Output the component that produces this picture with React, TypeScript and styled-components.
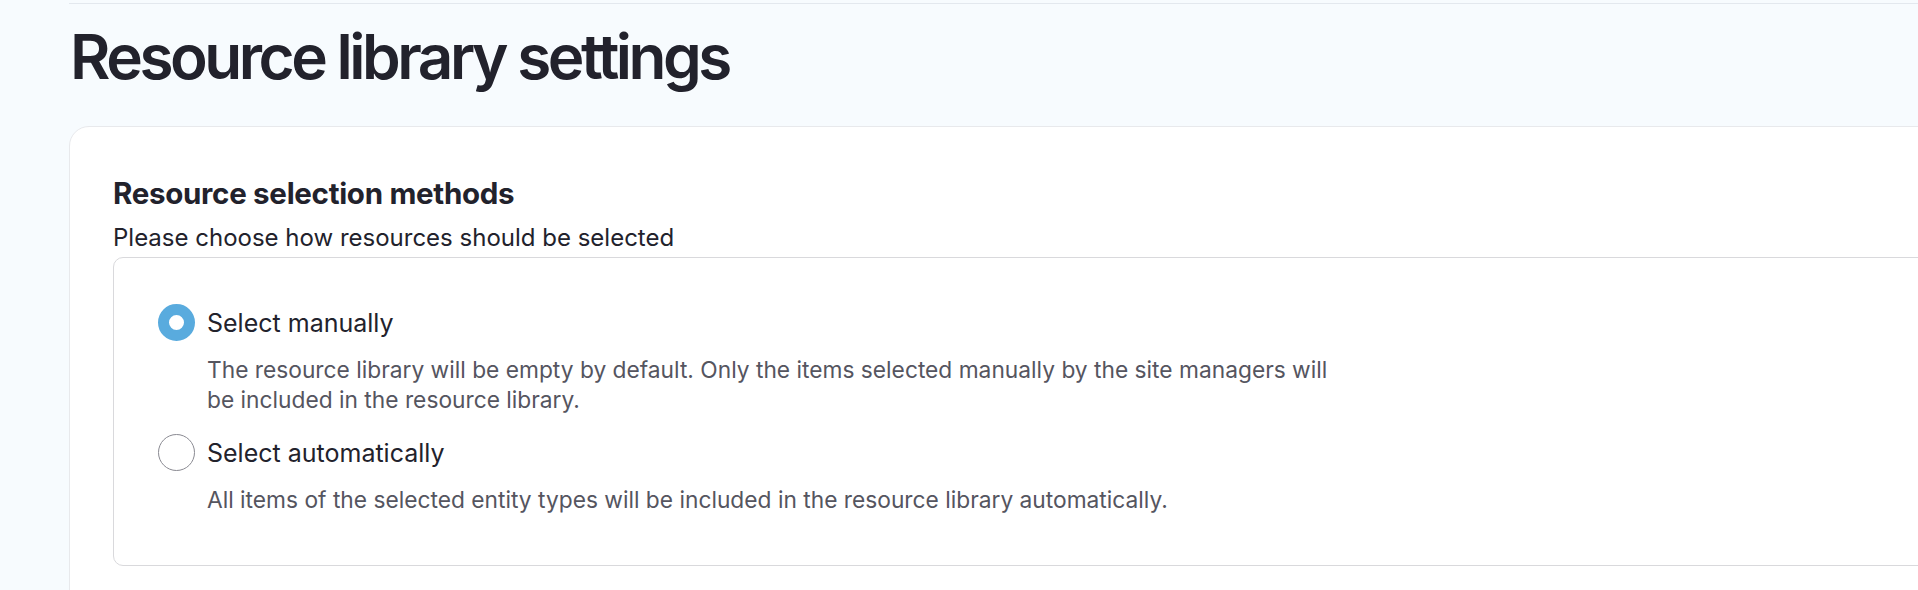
import { createGlobalStyle, styled } from "styled-components"

const GlobalStyle = createGlobalStyle`
  html, body {
    margin: 0;
    padding: 0;
    background: #f7fbfe;
    overflow: hidden;
  }
  body {
    font-family: Inter, "Noto Sans", sans-serif;
    color: #22222c;
  }
`

type Option = {
  id: string
  label: string
  description: string
  checked: boolean
}

const options: Option[] = [
  {
    id: "manual",
    label: "Select manually",
    description:
      "The resource library will be empty by default. Only the items selected manually by the site managers will be included in the resource library.",
    checked: true,
  },
  {
    id: "automatic",
    label: "Select automatically",
    description:
      "All items of the selected entity types will be included in the resource library automatically.",
    checked: false,
  },
]

export default function App() {
  return (
    <>
      <GlobalStyle />
      <Page>
        <Main>
          <Title>Resource library settings</Title>
          <Card>
            <SectionTitle>Resource selection methods</SectionTitle>
            <SectionHint>Please choose how resources should be selected</SectionHint>
            <OptionsBox>
              {options.map((option) => (
                <OptionRow key={option.id}>
                  <Radio $checked={option.checked} />
                  <OptionText>
                    <OptionLabel>{option.label}</OptionLabel>
                    <OptionDescription>{option.description}</OptionDescription>
                  </OptionText>
                </OptionRow>
              ))}
            </OptionsBox>
          </Card>
        </Main>
      </Page>
    </>
  )
}

const Page = styled.div`
  padding-top: 3px;
  padding-left: 69px;
  height: 590px;
  box-sizing: border-box;
`

const Main = styled.main`
  width: 2000px;
  border-top: 1px solid #e3e8ee;
`

// tight tracking to match the display face of the original heading
const Title = styled.h1`
  margin: 0;
  padding: 18px 0 34px 1px;
  font-size: 62px;
  line-height: 70px;
  font-weight: 600;
  letter-spacing: -0.056em;
  color: #22222c;
`

const Card = styled.section`
  background: #ffffff;
  border: 1px solid #e8e9ec;
  border-radius: 20px;
  padding: 48px 43px 40px;
  min-height: 500px;
`

const SectionTitle = styled.h2`
  margin: 0;
  font-size: 29.5px;
  line-height: 36px;
  font-weight: 700;
  letter-spacing: -0.01em;
  color: #22222c;
`

const SectionHint = styled.p`
  margin: 11px 0 3px;
  font-size: 24px;
  line-height: 32px;
  color: #22222c;
`

const OptionsBox = styled.div`
  border: 1px solid #d9d9dc;
  border-radius: 10px;
  padding: 46px 44px 50px;
  display: flex;
  flex-direction: column;
  gap: 19px;
`

const OptionRow = styled.label`
  display: flex;
  align-items: flex-start;
  gap: 12px;
`

const Radio = styled.span<{ $checked: boolean }>`
  flex: none;
  width: 37px;
  height: 37px;
  box-sizing: border-box;
  border-radius: 50%;
  background: #ffffff;
  border: ${({ $checked }) =>
    $checked ? "11px solid #59abde" : "1px solid #8a8a92"};
`

const OptionText = styled.div`
  display: flex;
  flex-direction: column;
  max-width: 1135px;
`

const OptionLabel = styled.span`
  padding-top: 1px;
  font-size: 25px;
  line-height: 36px;
  color: #22222c;
`

const OptionDescription = styled.span`
  margin-top: 14px;
  font-size: 22.75px;
  line-height: 30px;
  color: #55555f;
`
